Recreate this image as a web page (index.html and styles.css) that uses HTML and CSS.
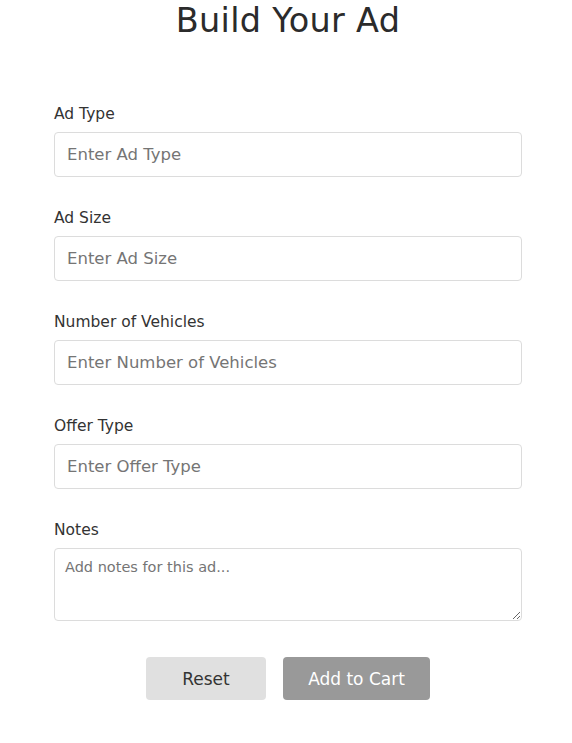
FILE: index.html
```html
<!DOCTYPE html>
<html lang="en">
<head>
<meta charset="utf-8">
<title>Build Your Ad</title>
<link rel="stylesheet" href="styles.css">
</head>
<body>
<main class="page">
  <h1 class="title">Build Your Ad</h1>
  <form class="ad-form">
    <div class="field">
      <label class="field-label" for="adType">Ad Type</label>
      <input class="field-input" id="adType" type="text" placeholder="Enter Ad Type">
    </div>
    <div class="field">
      <label class="field-label" for="adSize">Ad Size</label>
      <input class="field-input" id="adSize" type="text" placeholder="Enter Ad Size">
    </div>
    <div class="field">
      <label class="field-label" for="vehicles">Number of Vehicles</label>
      <input class="field-input" id="vehicles" type="text" placeholder="Enter Number of Vehicles">
    </div>
    <div class="field">
      <label class="field-label" for="offerType">Offer Type</label>
      <input class="field-input" id="offerType" type="text" placeholder="Enter Offer Type">
    </div>
    <div class="field">
      <label class="field-label" for="notes">Notes</label>
      <textarea class="field-textarea" id="notes" placeholder="Add notes for this ad..."></textarea>
    </div>
    <div class="actions">
      <button type="button" class="btn btn-reset">Reset</button>
      <button type="button" class="btn btn-cart">Add to Cart</button>
    </div>
  </form>
</main>
</body>
</html>
```
FILE: styles.css
```css
* { box-sizing: border-box; }
html, body { margin: 0; padding: 0; background: #fff; }
body {
  font-family: "DejaVu Sans", "Open Sans", sans-serif;
  color: #333;
}
.page {
  width: 468px;
  margin: 0 auto;
  padding-left: 4px;
  box-sizing: content-box;
}
.title {
  margin: 0;
  padding-top: 1px;
  height: 100px;
  text-align: center;
  font-size: 33.5px;
  font-weight: 500;
  color: #2b2b2b;
  line-height: 40px;
  letter-spacing: 0.3px;
}
.ad-form {
  display: flex;
  flex-direction: column;
}
.field {
  display: flex;
  flex-direction: column;
  gap: 8px;
  margin-bottom: 27px;
}
.field-label {
  font-size: 15.5px;
  line-height: 18px;
  color: #333;
  height: 24px;
  padding-top: 5px;
}
.field-input {
  width: 468px;
  height: 45px;
  border: 1px solid #dcdcdc;
  border-radius: 4px;
  padding: 0 12px;
  font-family: inherit;
  font-size: 16.5px;
  color: #333;
  background: #fff;
}
.field-input::placeholder { color: #757575; }
.field-textarea {
  width: 468px;
  height: 73px;
  border: 1px solid #dcdcdc;
  border-radius: 4px;
  padding: 10px 10px;
  font-family: inherit;
  font-size: 14.5px;
  color: #333;
  resize: vertical;
  background: #fff;
}
.field-textarea::placeholder { color: #757575; }
.actions {
  display: flex;
  justify-content: center;
  gap: 17px;
  margin-top: 9px;
}
.btn {
  height: 43px;
  border: none;
  border-radius: 4px;
  font-family: inherit;
  font-size: 17px;
  padding: 0;
}
.btn-reset {
  width: 120px;
  background: #e0e0e0;
  color: #333;
}
.btn-cart {
  width: 147px;
  background: #999;
  color: #fff;
}
```
